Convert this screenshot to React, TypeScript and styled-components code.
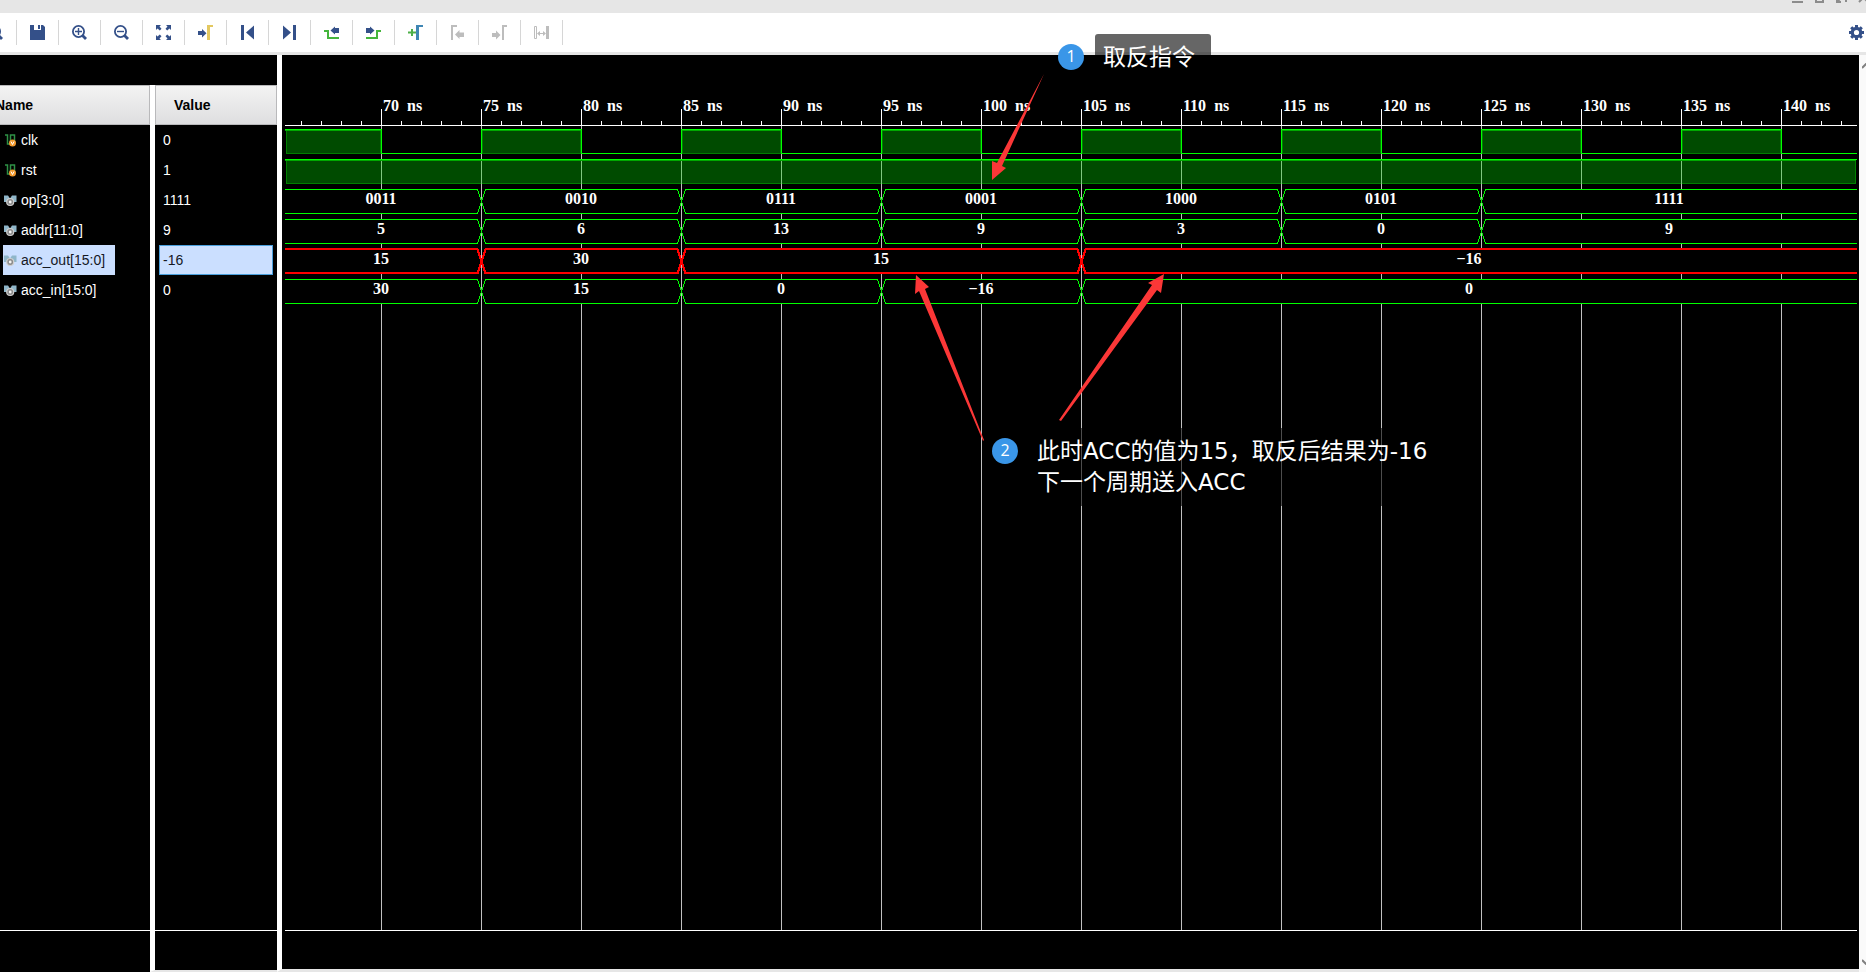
import React, { useLayoutEffect, useRef, useState } from "react";
import styled, { createGlobalStyle } from "styled-components";

const NAVY = "#345089";
const GREEN = "#45b53c";
const MUTED = "#bdbdbd";

const GlobalStyle = createGlobalStyle`
  *, *::before, *::after { box-sizing: border-box; }
  html, body { margin: 0; background: #fff; }
  body { font-family: "Liberation Sans", Arial, sans-serif; font-size: 14px; }
  button { appearance: none; border: 0; padding: 0; background: none; cursor: pointer; }
`;

const Shell = styled.div`
  height: 100vh;
  min-height: 480px;
  display: grid;
  grid-template-rows: 13px 42px minmax(0, 1fr);
  overflow: hidden;
`;

const TitleBar = styled.header`
  display: flex;
  justify-content: flex-end;
  align-items: flex-end;
  gap: 11px;
  padding-bottom: 10px;
  background: #e6e6e6;
  overflow: hidden;
`;

const WindowButton = styled.button`
  display: block;
  width: 11px;
  height: 11px;
  flex: none;
  color: #8c8c8c;
  &:last-child { margin-right: -3px; }
  svg { display: block; }
`;

const Toolbar = styled.nav`
  display: flex;
  align-items: center;
  justify-content: space-between;
  background: #fff;
  border-bottom: 3px solid #e6e6e6;
  overflow: hidden;
`;

const ToolGroup = styled.div`
  display: flex;
  margin-left: -25px;
`;

const ToolButton = styled.button`
  display: flex;
  align-items: center;
  justify-content: center;
  width: 42px;
  height: 25px;
  border-right: 1px solid #d6d6d6;
  svg { display: block; }
`;

const SettingsButton = styled.button`
  margin-right: 2px;
  svg { display: block; }
`;

const Workspace = styled.main`
  display: grid;
  grid-template-columns: 277px minmax(0, 1fr) 7px;
  min-height: 0;
`;

const SignalPanel = styled.section`
  display: grid;
  grid-template-rows: 30px minmax(0, 1fr);
  background: #000;
  min-height: 0;
`;

const SignalTable = styled.table`
  grid-row: 2;
  width: 100%;
  height: 100%;
  table-layout: fixed;
  border-collapse: separate;
  border-spacing: 0;
  color: #fff;
`;

const NameColumn = styled.col`
  width: 150px;
`;

const HeadCell = styled.th<{ $value?: boolean }>`
  height: 40px;
  padding: 0;
  text-align: left;
  font-size: 14px;
  font-weight: bold;
  color: #000;
  background: #fff;
  border-left: ${(p) => (p.$value ? "5px solid #fff" : "0")};
`;

const HeadLabel = styled.div<{ $value?: boolean }>`
  height: 40px;
  line-height: 38px;
  padding-left: ${(p) => (p.$value ? "18px" : "0")};
  text-indent: ${(p) => (p.$value ? "0" : "-5px")};
  border: 1px solid #b9b9bb;
  border-left-width: ${(p) => (p.$value ? "1px" : "0")};
  background: linear-gradient(#f3f3f3, #dedee0);
  overflow: hidden;
`;

const Cell = styled.td<{ $value?: boolean }>`
  height: 30px;
  padding: 0 4px 0 ${(p) => (p.$value ? "4px" : "3px")};
  border-left: ${(p) => (p.$value ? "5px solid #fff" : "0")};
`;

const FillCell = styled.td<{ $value?: boolean }>`
  padding: 0;
  border-left: ${(p) => (p.$value ? "5px solid #fff" : "0")};
`;

const FootCell = styled(FillCell)`
  height: 42px;
  border-top: 1px solid #fff;
  border-bottom: ${(p) => (p.$value ? "2px solid #e6e6e6" : "0")};
`;

const SignalName = styled.div<{ $selected: boolean }>`
  display: inline-flex;
  align-items: center;
  gap: 4px;
  height: 30px;
  padding: 0 10px 0 0;
  vertical-align: top;
  white-space: nowrap;
  color: ${(p) => (p.$selected ? "#15181f" : "#fff")};
  background: ${(p) => (p.$selected ? "#cbdfff" : "transparent")};
  svg { display: block; }
`;

const SignalValue = styled.div<{ $selected: boolean }>`
  height: 30px;
  line-height: 28px;
  padding-left: 3px;
  border: 1px solid ${(p) => (p.$selected ? "#4a9fdc" : "transparent")};
  color: ${(p) => (p.$selected ? "#15181f" : "#fff")};
  background: ${(p) => (p.$selected ? "#cbdfff" : "transparent")};
`;

const WavePane = styled.section`
  position: relative;
  min-width: 0;
  min-height: 0;
  padding: 0 2px 0 3px;
  border-left: 5px solid #fff;
  border-bottom: 3px solid #e6e6e6;
  background: #000;
`;

const WaveSvg = styled.svg`
  display: block;
  width: 100%;
  height: 100%;
  text {
    font-family: "Liberation Serif", "Times New Roman", serif;
    font-size: 16px;
    font-weight: bold;
    fill: #fff;
  }
`;

const ScrollTrack = styled.div`
  display: flex;
  flex-direction: column;
  justify-content: space-between;
  padding: 8px 0 7px 3px;
  background: #fafafa;
  overflow: hidden;
  svg { display: block; }
`;

const ArrowLayer = styled.svg`
  position: absolute;
  left: 0;
  top: 0;
  width: 100%;
  height: 100%;
  pointer-events: none;
`;

const Note = styled.div<{ $x: number; $y: number }>`
  position: absolute;
  left: ${(p) => p.$x}px;
  top: ${(p) => p.$y}px;
  display: flex;
  align-items: flex-start;
  gap: 11px;
`;

const Badge = styled.span`
  flex: none;
  width: 26px;
  height: 26px;
  margin-top: 10px;
  border-radius: 50%;
  background: #3a96e8;
  color: #fff;
  font: 16px/25px "Open Sans", "Noto Sans", sans-serif;
  text-align: center;
`;

const NoteText = styled.p`
  margin: 0;
  padding: 8px 16px 8px 8px;
  border-radius: 3px;
  background: rgba(0, 0, 0, 0.6);
  color: #fff;
  font: 23px/31px "DejaVu Sans", "Noto Sans CJK SC", sans-serif;
  white-space: nowrap;
`;

/* ---------- toolbar icons, 15 x 15 ---------- */

const Icon = ({ children }: { children: React.ReactNode }) => (
  <svg width="15" height="15" viewBox="0 0 15 15" fill="none" aria-hidden="true">
    {children}
  </svg>
);

const Lens = ({ children }: { children?: React.ReactNode }) => (
  <Icon>
    <circle cx="6.5" cy="6.5" r="5.6" stroke={NAVY} strokeWidth="1.8" />
    <path d="M10.5 10.5L14 14" stroke={NAVY} strokeWidth="2.8" />
    {children}
  </Icon>
);

const TOOLS: { label: string; icon: React.ReactNode }[] = [
  { label: "Search", icon: <Lens /> },
  {
    label: "Save",
    icon: (
      <Icon>
        <path d="M0 0H4V5H11V0H13L15 2V15H0Z" fill={NAVY} />
        <path d="M8 0H10V4H8Z" fill={NAVY} />
      </Icon>
    ),
  },
  {
    label: "Zoom in",
    icon: (
      <Lens>
        <path d="M3 6.5H10M6.5 3V10" stroke={NAVY} strokeWidth="1.4" />
      </Lens>
    ),
  },
  {
    label: "Zoom out",
    icon: (
      <Lens>
        <path d="M3 6.5H10" stroke={NAVY} strokeWidth="1.4" />
      </Lens>
    ),
  },
  {
    label: "Zoom fit",
    icon: (
      <Icon>
        <path d="M0 0H5L3.5 1.5L5.5 3.8L3.8 5.5L1.5 3.5L0 5ZM15 0V5L13.5 3.5L11.2 5.5L9.5 3.8L11.5 1.5L10 0ZM0 15V10L1.5 11.5L3.8 9.5L5.5 11.2L3.5 13.5L5 15ZM15 15H10L11.5 13.5L9.5 11.2L11.2 9.5L13.5 11.5L15 10Z" fill={NAVY} />
      </Icon>
    ),
  },
  {
    label: "Go to cursor",
    icon: (
      <Icon>
        <path d="M0 6H4V4L8.5 8.2L4 12.5V10H0Z" fill={NAVY} />
        <path d="M9 0H15V2H12V15H9Z" fill="#e3c860" />
      </Icon>
    ),
  },
  {
    label: "Go to start",
    icon: (
      <Icon>
        <path d="M1 0H4V15H1ZM14 0.5V14.5L6 7.5Z" fill={NAVY} />
      </Icon>
    ),
  },
  {
    label: "Go to end",
    icon: (
      <Icon>
        <path d="M11 0H14V15H11ZM1 0.5V14.5L9 7.5Z" fill={NAVY} />
      </Icon>
    ),
  },
  {
    label: "Previous transition",
    icon: (
      <Icon>
        <path d="M0 5H5V12H15V14H3V7H0Z" fill={GREEN} />
        <path d="M6.500 5.500L11 1.500V3H15V8H11V9.500Z" fill={NAVY} />
      </Icon>
    ),
  },
  {
    label: "Next transition",
    icon: (
      <Icon>
        <path d="M15 5H10V12H0V14H12V7H15Z" fill={GREEN} />
        <path d="M8.500 5.500L4 1.500V3H0V8H4V9.500Z" fill={NAVY} />
      </Icon>
    ),
  },
  {
    label: "Add marker",
    icon: (
      <Icon>
        <path d="M0 6.500H3V4H5V6.500H8V8.500H5V11H3V8.500H0Z" fill="#4fb04a" />
        <path d="M8 0H15V2H11V15H8Z" fill="#3f86b4" />
      </Icon>
    ),
  },
  {
    label: "Previous marker",
    icon: (
      <Icon>
        <path d="M1 0H7V2H3V15H1ZM5 9.500L9.500 5V7.500H14V12H9.500V14Z" fill={MUTED} />
      </Icon>
    ),
  },
  {
    label: "Next marker",
    icon: (
      <Icon>
        <path d="M10 0H15V2H12V15H10ZM8.500 10L4 5.500V8H0V12H4V14.500Z" fill={MUTED} />
      </Icon>
    ),
  },
  {
    label: "Swap cursors",
    icon: (
      <Icon>
        <path d="M0.500 1.500H2.500V13.500H0.500Z" stroke={MUTED} />
        <path d="M12 1H15V14H12ZM3 8.500L6 6V8H9V6L12 8.500L9 11V9H6V11Z" fill={MUTED} />
      </Icon>
    ),
  },
];

const GearIcon = () => (
  <Icon>
    <circle cx="7.500" cy="7.500" r="4.200" stroke={NAVY} strokeWidth="3.200" />
    {[0, 45, 90, 135].map((a) => (
      <path key={a} d="M6 0H9V3H6ZM6 12H9V15H6Z" fill={NAVY} transform={`rotate(${a} 7.500 7.500)`} />
    ))}
  </Icon>
);

const WINDOW_ICONS = [
  { label: "Minimize", path: "M0 10H11" },
  { label: "Maximize", path: "M2 1H9V10H2Z" },
  { label: "Float", path: "M1 5V10H5M1 10L4 7M10 10V7" },
  { label: "Close", path: "M1 1L10 10M10 1L1 10" },
];

/* ---------- signal icons ---------- */

const ScalarIcon = () => (
  <svg width="14" height="14" viewBox="0 0 14 14" fill="none" aria-hidden="true">
    <path d="M2 2H4.500V11H7.500V2H11.500V8" stroke="#2f9146" strokeWidth="1.500" />
    <circle cx="9.500" cy="10" r="3.500" fill="#f29a2e" />
    <path d="M8 8.500L9.500 11.500L11 8.500" stroke="#fff" />
  </svg>
);

const BusIcon = () => (
  <svg width="14" height="14" viewBox="0 0 14 14" fill="none" aria-hidden="true">
    <path d="M1 2.500H5L7 5.500L9 2.500H13.500V9H1Z" fill="#8fb6c9" />
    <circle cx="7.200" cy="9" r="3.500" fill="#8b8b8b" stroke="#cfcfcf" strokeWidth="1.200" />
    <circle cx="7.200" cy="9" r="1.400" fill="#f4f4f4" />
  </svg>
);

/* ---------- data ---------- */

type Segment = [start: number, end: number | null, text: string];

interface Signal {
  name: string;
  value: string;
  kind: "clock" | "high" | "bus";
  selected?: boolean;
  segments?: Segment[];
}

const SIGNALS: Signal[] = [
  { name: "clk", value: "0", kind: "clock" },
  { name: "rst", value: "1", kind: "high" },
  {
    name: "op[3:0]",
    value: "1111",
    kind: "bus",
    segments: [
      [65, 75, "0011"],
      [75, 85, "0010"],
      [85, 95, "0111"],
      [95, 105, "0001"],
      [105, 115, "1000"],
      [115, 125, "0101"],
      [125, null, "1111"],
    ],
  },
  {
    name: "addr[11:0]",
    value: "9",
    kind: "bus",
    segments: [
      [65, 75, "5"],
      [75, 85, "6"],
      [85, 95, "13"],
      [95, 105, "9"],
      [105, 115, "3"],
      [115, 125, "0"],
      [125, null, "9"],
    ],
  },
  {
    name: "acc_out[15:0]",
    value: "-16",
    kind: "bus",
    selected: true,
    segments: [
      [65, 75, "15"],
      [75, 85, "30"],
      [85, 105, "15"],
      [105, null, "−16"],
    ],
  },
  {
    name: "acc_in[15:0]",
    value: "0",
    kind: "bus",
    segments: [
      [65, 75, "30"],
      [75, 85, "15"],
      [85, 95, "0"],
      [95, 105, "−16"],
      [105, null, "0"],
    ],
  },
];

/* ---------- waveform ---------- */

const PX_PER_NS = 20;
const RULER_Y = 70;
const FIRST_ROW = 74;
const ROW_PITCH = 30;
const WAVE_HEIGHT = 24;
const xAt = (ns: number) => (ns - 70) * PX_PER_NS + 96;

const range = (from: number, to: number, step: number) => {
  const out: number[] = [];
  for (let v = from; v <= to; v += step) out.push(v);
  return out;
};

const HighBlock = ({ x, end, y, rise, fall }: { x: number; end: number; y: number; rise?: boolean; fall?: boolean }) => (
  <g>
    <rect x={x + 1} y={y + 1} width={end - x - 1} height={WAVE_HEIGHT} fill="#008000" />
    <rect x={x + 2} y={y + 2} width={end - x - 3} height={WAVE_HEIGHT - 2} fill="#004b00" />
    <rect x={x} y={y + 1} width={end - x} height="1" fill="#00a800" />
    <rect x={x} y={y} width={end - x + 1} height="1" fill="#0f0" />
    {rise && <rect x={x} y={y} width="1" height={WAVE_HEIGHT + 1} fill="#0f0" />}
    {fall && <rect x={end} y={y} width="1" height={WAVE_HEIGHT + 1} fill="#0f0" />}
  </g>
);

const Bus = ({ signal, y, width }: { signal: Signal; y: number; width: number }) => {
  const color = signal.selected ? "#f00" : "#0f0";
  const stroke = signal.selected ? 2 : 1;
  const mid = y + WAVE_HEIGHT / 2;
  const low = y + WAVE_HEIGHT;
  return (
    <g>
      {signal.segments!.map(([from, to, text]) => {
        const a = xAt(from);
        const b = to === null ? width : xAt(to);
        const leftEdge = from === 65 ? "" : `M${a + 4} ${low}L${a} ${mid}L${a + 4} ${y}`;
        const rightEdge = to === null ? "" : `M${b - 4} ${y}L${b} ${mid}L${b - 4} ${low}`;
        const left = from === 65 ? `M0 ${low}V${y}` : leftEdge;
        const right = to === null ? `H${b}V${low}` : `H${b - 4}L${b} ${mid}L${b - 4} ${low}`;
        const start = from === 65 ? 0 : a + 4;
        const stop = to === null ? b : b - 3;
        return (
          <g key={from}>
            <path d={`${left}${right}Z`} fill="#000" />
            <g transform="translate(0.5 0.5)">
              <path d={`${leftEdge}${rightEdge}`} fill="none" stroke={color} strokeWidth={stroke} shapeRendering="crispEdges" />
            </g>
            <rect x={start} y={y - stroke + 1} width={stop - start} height={stroke} fill={color} />
            <rect x={start} y={low - stroke + 1} width={stop - start} height={stroke} fill={color} />
            <text x={Math.round((a + b) / 2)} y={y + 15} textAnchor="middle">
              {text}
            </text>
          </g>
        );
      })}
    </g>
  );
};

const Waveform = () => {
  const ref = useRef<SVGSVGElement>(null);
  const [size, setSize] = useState({ width: 1572, height: 914 });

  useLayoutEffect(() => {
    const node = ref.current;
    if (!node) return;
    const measure = () => {
      const box = node.getBoundingClientRect();
      setSize({ width: Math.round(box.width), height: Math.round(box.height) });
    };
    measure();
    const observer = new ResizeObserver(measure);
    observer.observe(node);
    return () => observer.disconnect();
  }, []);

  const { width, height } = size;
  const lastNs = 70 + (width - 96) / PX_PER_NS;
  const major = range(70, lastNs, 5);
  const minor = range(66, lastNs, 1).filter((ns) => ns % 5 !== 0);
  const floor = height - 39;
  const rstY = FIRST_ROW + ROW_PITCH;

  return (
    <WaveSvg ref={ref} role="img" aria-label="Waveform">
      {major.map((ns) => (
        <rect key={ns} x={xAt(ns)} y={RULER_Y} width="1" height={floor - RULER_Y} fill="#c0c0c0" />
      ))}
      {minor.map((ns) => (
        <rect key={ns} x={xAt(ns)} y={RULER_Y - 4} width="1" height="4" fill="#fff" />
      ))}
      {major.map((ns) => (
        <g key={ns}>
          <rect x={xAt(ns)} y={RULER_Y - 16} width="1" height="16" fill="#fff" />
          <text x={xAt(ns) + 2} y={RULER_Y - 14}>
            {ns}
            <tspan> </tspan>
            <tspan dx="4">ns</tspan>
          </text>
        </g>
      ))}
      <rect x="0" y={RULER_Y} width={width} height="1" fill="#fff" />
      <rect x="0" y={floor} width={width} height="1" fill="#fff" />

      {range(65, lastNs, 10).map((ns) => {
        const fall = xAt(ns + 5);
        const rise = Math.min(xAt(ns + 10), width);
        return (
          <g key={ns}>
            <HighBlock x={Math.max(xAt(ns), 0)} end={fall} y={FIRST_ROW} rise={ns !== 65} fall />
            <rect x={fall} y={FIRST_ROW + WAVE_HEIGHT} width={Math.max(rise - fall, 0)} height="1" fill="#0f0" />
          </g>
        );
      })}

      <HighBlock x={0} end={width - 1} y={rstY} />
      {major.map((ns) => (
        <rect key={ns} x={xAt(ns)} y={rstY + 2} width="1" height={WAVE_HEIGHT - 1} fill="#80c880" />
      ))}

      {SIGNALS.map((signal, i) =>
        signal.kind === "bus" ? (
          <Bus key={signal.name} signal={signal} y={FIRST_ROW + i * ROW_PITCH} width={width} />
        ) : null
      )}
    </WaveSvg>
  );
};

const Annotations = () => (
  <>
    <Note $x={776} $y={-21}>
      <Badge>1</Badge>
      <NoteText>取反指令</NoteText>
    </Note>
    <Note $x={710} $y={373}>
      <Badge>2</Badge>
      <NoteText>
        此时ACC的值为15，取反后结果为-16
        <br />
        下一个周期送入ACC
      </NoteText>
    </Note>
    <ArrowLayer aria-hidden="true">
      <g fill="#fb3737">
        <path d="M710 125V106L715 108L762 19L720 111L724 113Z" />
        <path d="M634 220L633 239L637 236L701 386L702 385L643 234L647 232Z" />
        <path d="M882 219L879 238L875 235L779 366L777 365L870 230L866 228Z" />
      </g>
    </ArrowLayer>
  </>
);

export default function App() {
  return (
    <Shell>
      <GlobalStyle />
      <TitleBar>
        {WINDOW_ICONS.map((item) => (
          <WindowButton key={item.label} aria-label={item.label}>
            <svg width="11" height="11" viewBox="0 0 11 11" fill="none" aria-hidden="true">
              <path d={item.path} stroke="currentColor" strokeWidth="2" />
            </svg>
          </WindowButton>
        ))}
      </TitleBar>

      <Toolbar aria-label="Waveform tools">
        <ToolGroup>
          {TOOLS.map((tool) => (
            <ToolButton key={tool.label} aria-label={tool.label}>
              {tool.icon}
            </ToolButton>
          ))}
        </ToolGroup>
        <SettingsButton aria-label="Settings">
          <GearIcon />
        </SettingsButton>
      </Toolbar>

      <Workspace>
        <SignalPanel>
          <SignalTable>
            <colgroup>
              <NameColumn />
              <col />
            </colgroup>
            <thead>
              <tr>
                <HeadCell scope="col">
                  <HeadLabel>Name</HeadLabel>
                </HeadCell>
                <HeadCell scope="col" $value>
                  <HeadLabel $value>Value</HeadLabel>
                </HeadCell>
              </tr>
            </thead>
            <tbody>
              {SIGNALS.map((signal) => (
                <tr key={signal.name}>
                  <Cell>
                    <SignalName $selected={!!signal.selected}>
                      {signal.kind === "bus" ? <BusIcon /> : <ScalarIcon />}
                      {signal.name}
                    </SignalName>
                  </Cell>
                  <Cell $value>
                    <SignalValue $selected={!!signal.selected}>{signal.value}</SignalValue>
                  </Cell>
                </tr>
              ))}
              <tr>
                <FillCell />
                <FillCell $value />
              </tr>
              <tr>
                <FootCell />
                <FootCell $value />
              </tr>
            </tbody>
          </SignalTable>
        </SignalPanel>

        <WavePane>
          <Waveform />
          <Annotations />
        </WavePane>

        <ScrollTrack>
          <svg width="8" height="6" viewBox="0 0 8 6" aria-hidden="true">
            <path d="M0 5L4 1L8 5" fill="none" stroke="#808080" strokeWidth="2" />
          </svg>
          <svg width="8" height="6" viewBox="0 0 8 6" aria-hidden="true">
            <path d="M0 1L4 5L8 1" fill="none" stroke="#808080" strokeWidth="2" />
          </svg>
        </ScrollTrack>
      </Workspace>
    </Shell>
  );
}
